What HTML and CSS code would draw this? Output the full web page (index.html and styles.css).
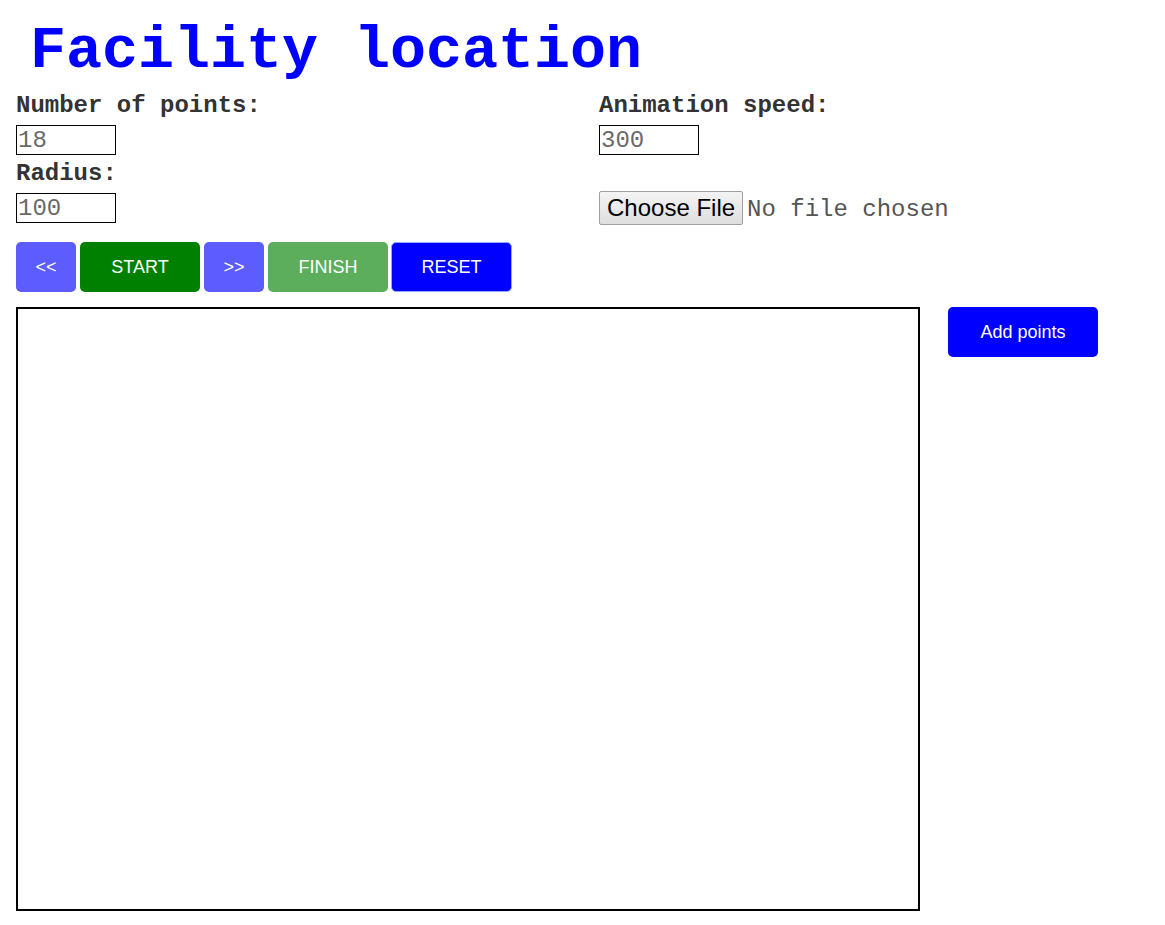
FILE: index.html
```html
<!DOCTYPE html>
<html lang="en">
<head>
<meta charset="utf-8">
<title>Facility location</title>
<link rel="stylesheet" href="styles.css">
</head>
<body>
<div class="page">
  <h1 class="title">Facility location</h1>
  <div class="controls">
    <div class="col">
      <div class="field">
        <label class="label" for="npoints">Number of points:</label>
        <input class="num" id="npoints" type="text" value="18">
      </div>
      <div class="field">
        <label class="label" for="radius">Radius:</label>
        <input class="num" id="radius" type="text" value="100">
      </div>
    </div>
    <div class="col">
      <div class="field">
        <label class="label" for="speed">Animation speed:</label>
        <input class="num" id="speed" type="text" value="300">
      </div>
      <div class="file-row">
        <input class="file" type="file">
      </div>
    </div>
  </div>
  <div class="buttons">
    <button class="btn btn-nav">&lt;&lt;</button>
    <button class="btn btn-start">START</button>
    <button class="btn btn-nav">&gt;&gt;</button>
    <button class="btn btn-finish">FINISH</button>
    <button class="btn btn-reset">RESET</button>
  </div>
  <div class="stage">
    <canvas class="canvas" width="900" height="600"></canvas>
    <button class="btn btn-add">Add points</button>
  </div>
</div>
</body>
</html>
```

FILE: styles.css
```css
html, body {
  background: #fff;
}
body {
  margin: 8px;
  font-family: "Courier New", "Liberation Mono", monospace;
  color: #333;
}
.page {
  padding: 0 8px;
}
.title {
  margin: 9px 0 7px;
  padding-left: 14px;
  font-size: 60px;
  line-height: 68px;
  font-weight: bold;
  color: #0000ff;
}
.controls {
  display: grid;
  grid-template-columns: 583px 1fr;
}
.field {
  display: flex;
  flex-direction: column;
  align-items: flex-start;
  margin-bottom: 5px;
}
.label {
  display: block;
  font-size: 24px;
  line-height: 27px;
  font-weight: bold;
  color: #333;
  margin-bottom: 6px;
}
.num {
  box-sizing: border-box;
  width: 100px;
  height: 30px;
  margin: 0;
  padding: 0 1px;
  border: 1px solid #000;
  font-family: "Courier New", "Liberation Mono", monospace;
  font-size: 24px;
  color: #6a6a6a;
  outline: none;
}
.file-row {
  margin-top: 36px;
  height: 34px;
}
.file {
  width: 380px;
  height: 34px;
  font-family: "Courier New", "Liberation Mono", monospace;
  font-size: 24px;
  color: #555;
}
.file::file-selector-button {
  font-family: Arial, "Liberation Sans", sans-serif;
  font-size: 24px;
  color: #000;
  height: 34px;
  padding: 0 7px;
  margin: 0 4px 0 0;
  border: 1px solid #a0a0a0;
  border-radius: 2px;
  background: linear-gradient(#f4f4f4, #dedede);
}
.buttons {
  display: flex;
  gap: 4px;
  margin-top: 14px;
}
.btn {
  height: 50px;
  border: none;
  border-radius: 5px;
  font-family: Arial, "Liberation Sans", sans-serif;
  font-size: 18px;
  color: #fff;
  padding: 0;
  cursor: pointer;
}
.btn-nav {
  width: 60px;
  background: #5c5cff;
}
.btn-start {
  width: 120px;
  background: #008000;
}
.btn-finish {
  width: 120px;
  background: #5cae5c;
}
.btn-reset {
  width: 121px;
  margin-left: -1px;
  background: #0000ff;
  border: 1px solid #8aaaff;
}
.stage {
  display: flex;
  align-items: flex-start;
  gap: 28px;
  margin-top: 15px;
}
.canvas {
  display: block;
  width: 900px;
  height: 600px;
  border: 2px solid #000;
  background: #fff;
}
.btn-add {
  width: 150px;
  background: #0000ff;
}
```
